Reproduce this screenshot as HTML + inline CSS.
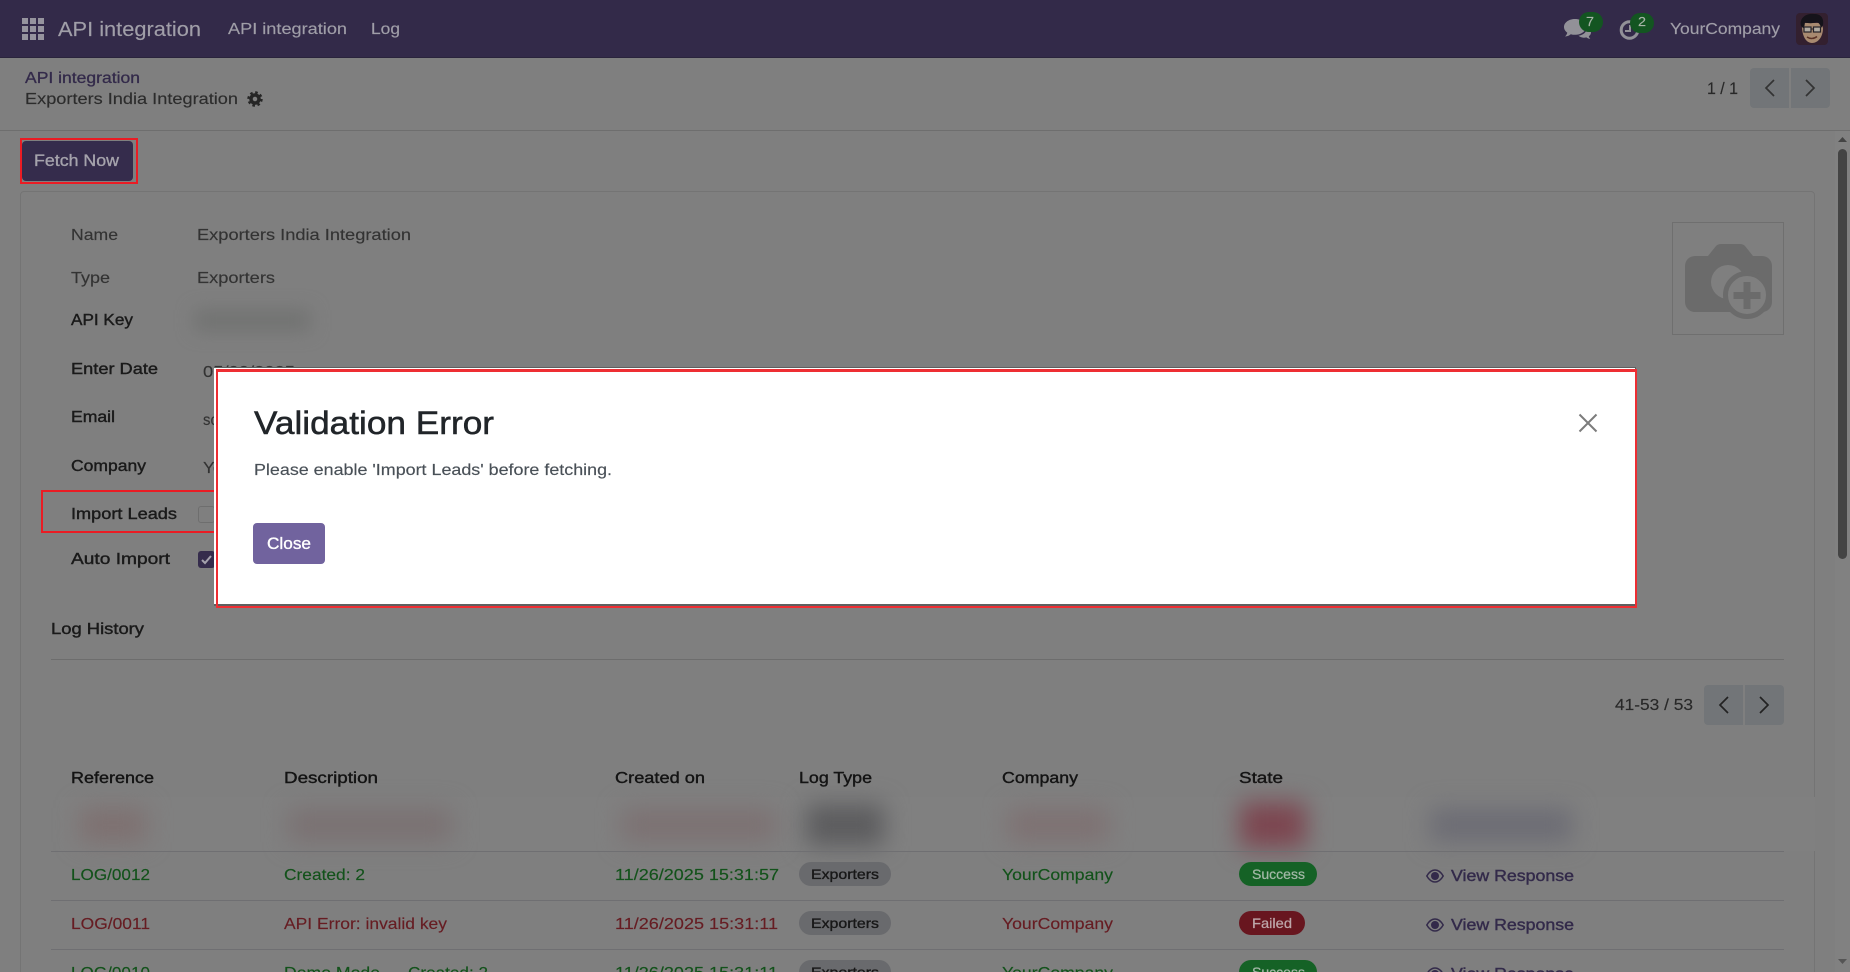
<!DOCTYPE html>
<html lang="en">
<head>
<meta charset="utf-8">
<title>API integration</title>
<style>
html,body{margin:0;padding:0;width:1850px;height:972px;overflow:hidden;background:#7f7f7f;font-family:"Liberation Sans",sans-serif;}
#p{position:relative;width:1850px;height:972px;overflow:hidden;background:#7f7f7f;}
.a{position:absolute;box-sizing:border-box;}
.t{position:absolute;white-space:nowrap;line-height:20px;height:20px;font-size:16px;color:#333;transform-origin:left center;margin-top:1px;-webkit-text-stroke:.15px currentColor;}
.m{-webkit-text-stroke:.4px currentColor;}
.n{margin-top:0;}
svg{position:absolute;overflow:visible;}
.g{color:#12521a}.r{color:#661c22}
.pill{position:absolute;height:24px;border-radius:12px;}
.bl{position:absolute;filter:blur(12px);}
</style>
</head>
<body>
<div id="p">
<!-- navbar -->
<div class="a" style="left:0;top:0;width:1850px;height:58px;background:#332a49;border-bottom:1px solid #2a243c;"></div>
<svg style="left:22px;top:18px" width="22" height="22" fill="#96949e"><rect x="0" y="0" width="6" height="6"/><rect x="8" y="0" width="6" height="6"/><rect x="16" y="0" width="6" height="6"/><rect x="0" y="8" width="6" height="6"/><rect x="8" y="8" width="6" height="6"/><rect x="16" y="8" width="6" height="6"/><rect x="0" y="16" width="6" height="6"/><rect x="8" y="16" width="6" height="6"/><rect x="16" y="16" width="6" height="6"/></svg>
<span class="t" style="left:58px;top:19px;font-size:20px;color:#a09ea8;--w:143">API integration</span>
<span class="t" style="left:228px;top:19px;font-size:16px;color:#a09ea8;--w:119">API integration</span>
<span class="t" style="left:371px;top:19px;font-size:16px;color:#a09ea8;--w:29">Log</span>
<svg style="left:1560px;top:10px" width="50" height="32"><path d="M15 9c-6 0-11 3.400-11 8 0 2.300 1.300 4.300 3.300 5.700-.4 1.500-1.300 2.800-2.300 3.800 2.300-.2 4.300-1 5.800-2.300 1.300.4 2.700.6 4.200.6 6 0 11-3.400 11-7.800s-5-8-11-8z" fill="#929198"/><path d="M27 18c0 3.800-3.600 7-8.500 7.800 1.300 1.200 3.200 1.900 5.300 1.900.9 0 1.700-.1 2.500-.3 1 .8 2.400 1.400 4 1.600-.7-.8-1.300-1.700-1.500-2.700 1.300-.9 2.200-2.300 2.200-3.800 0-1.900-1.500-3.600-4-4.500z" fill="#929198"/><rect x="19" y="2" width="24" height="20" rx="10" fill="#135521"/></svg>
<span class="t n" style="left:1586px;top:12px;font-size:13px;color:#a8b4a8;--w:8">7</span>
<svg style="left:1615px;top:10px" width="44" height="32"><circle cx="14.500" cy="20" r="8.300" fill="none" stroke="#929198" stroke-width="3"/><path d="M15 15v6h-5" fill="none" stroke="#929198" stroke-width="2"/><rect x="15" y="3" width="24" height="20" rx="10" fill="#135521"/></svg>
<span class="t n" style="left:1638px;top:12px;font-size:13px;color:#a8b4a8;--w:8">2</span>
<span class="t" style="left:1670px;top:19px;font-size:16px;color:#a09ea8;--w:110">YourCompany</span>
<svg style="left:1796px;top:13px" width="32" height="32"><rect width="32" height="32" rx="4" fill="#33202f"/><path d="M6 13c0 10 4 17 10 17s11-6 11-15l-2-5H8z" fill="#a88a70"/><path d="M5 13C3 5 10 0 18 1c7 0 10 4 9 11l-2 3c-.5-3-2-5-4-6-4 1.500-8 1.500-12 .5l-1 6c-1-.5-2-1.500-3-2.500z" fill="#15131a"/><rect x="8" y="14" width="7" height="5" fill="#b0aaa0" stroke="#252228" stroke-width="1.200"/><rect x="17.500" y="14" width="7" height="5" fill="#b0aaa0" stroke="#252228" stroke-width="1.200"/><path d="M15 16h2.500" stroke="#252228" stroke-width="1"/><path d="M11 24c3 2 7 2 10-.5" stroke="#5a3226" stroke-width="1.500" fill="none"/></svg>

<!-- control panel -->
<span class="t" style="left:25px;top:68px;font-size:16px;color:#332a4a;--w:115;-webkit-text-stroke:.3px #332a4a">API integration</span>
<span class="t" style="left:25px;top:89px;font-size:16px;color:#2c2c2c;--w:213">Exporters India Integration</span>
<svg style="left:247px;top:91px" width="16" height="16"><circle cx="8" cy="8" r="6.500" fill="none" stroke="#262626" stroke-width="2.400" stroke-dasharray="2.550 2.550"/><circle cx="8" cy="8" r="4" fill="none" stroke="#262626" stroke-width="3.500"/></svg>
<span class="t" style="left:1707px;top:78px;font-size:17px;color:#282828;--w:31">1 / 1</span>
<div class="a" style="left:1750px;top:68px;width:39px;height:40px;background:#727578;border-radius:4px 0 0 4px;"></div>
<div class="a" style="left:1791px;top:68px;width:39px;height:40px;background:#727578;border-radius:0 4px 4px 0;"></div>
<svg style="left:1750px;top:68px" width="80" height="40" fill="none" stroke="#333" stroke-width="1.700"><path d="M24 12l-8 8 8 8M56 12l8 8-8 8"/></svg>
<div class="a" style="left:0;top:130px;width:1850px;height:1px;background:#6e6e6e;"></div>

<!-- fetch now -->
<div class="a" style="left:22px;top:141px;width:111px;height:40px;background:#352c4c;border-radius:4px;"></div>
<span class="t" style="left:34px;top:150px;font-size:17px;color:#a5a3ac;--w:85;-webkit-text-stroke:.35px #a5a3ac">Fetch Now</span>
<div class="a" style="left:20px;top:138px;width:118px;height:46px;border:2px solid #ea1c24;"></div>

<!-- sheet -->
<div class="a" style="left:20px;top:191px;width:1795px;height:800px;border:1px solid #747474;border-radius:4px;background:#7f7f7f;"></div>
<span class="t" style="left:71px;top:225px;color:#333;--w:47">Name</span>
<span class="t" style="left:197px;top:225px;color:#333;--w:214">Exporters India Integration</span>
<span class="t" style="left:71px;top:268px;color:#333;--w:39">Type</span>
<span class="t" style="left:197px;top:268px;color:#333;--w:78">Exporters</span>
<span class="t m" style="left:71px;top:310px;color:#1a1a1a;--w:62">API Key</span>
<div class="bl" style="left:195px;top:310px;width:115px;height:21px;background:#717271;filter:blur(9px)"></div>
<span class="t m" style="left:71px;top:359px;color:#1a1a1a;--w:87">Enter Date</span>
<span class="t" style="left:203px;top:362px;color:#333;--w:92">05/00/2025</span>
<span class="t m" style="left:71px;top:407px;color:#1a1a1a;--w:44">Email</span>
<span class="t" style="left:203px;top:410px;color:#333;--w:30">sc@</span>
<span class="t m" style="left:71px;top:456px;color:#1a1a1a;--w:75">Company</span>
<span class="t" style="left:203px;top:458px;color:#333;--w:110">YourCompany</span>
<span class="t m" style="left:71px;top:504px;color:#1a1a1a;--w:106">Import Leads</span>
<div class="a" style="left:198px;top:506px;width:17px;height:17px;border:1px solid #6e6e6e;border-radius:3px;"></div>
<span class="t m" style="left:71px;top:549px;color:#1a1a1a;--w:99">Auto Import</span>
<div class="a" style="left:198px;top:551px;width:17px;height:17px;background:#352c4c;border-radius:3px;"></div>
<svg style="left:198px;top:551px" width="17" height="17"><path d="M4 9l3 3 6-7" stroke="#a5a2ad" stroke-width="2" fill="none"/></svg>
<div class="a" style="left:41px;top:490px;width:180px;height:43px;border:2px solid #ea1c24;"></div>

<!-- camera -->
<div class="a" style="left:1672px;top:222px;width:112px;height:113px;border:1px solid #6f6f6f;"></div>
<svg style="left:1672px;top:222px" width="112" height="113"><path d="M13 44a10 10 0 0 1 10-10h13l8-10q2-2 5-2h19q3 0 5 2l8 10h9a10 10 0 0 1 10 10v36a10 10 0 0 1-10 10H23a10 10 0 0 1-10-10z" fill="#6b6b6b"/><circle cx="56" cy="60" r="17" fill="#7f7f7f"/><circle cx="75" cy="73" r="21.500" fill="#7f7f7f" stroke="#6b6b6b" stroke-width="5"/><path d="M75 60v27M61.500 73.500h27" stroke="#6b6b6b" stroke-width="7"/></svg>

<!-- log history -->
<span class="t m" style="left:51px;top:619px;color:#1a1a1a;--w:93">Log History</span>
<div class="a" style="left:51px;top:659px;width:1733px;height:1px;background:#6d6d6d;"></div>
<span class="t" style="left:1615px;top:695px;color:#282828;--w:78">41-53 / 53</span>
<div class="a" style="left:1704px;top:685px;width:39px;height:40px;background:#727578;border-radius:4px 0 0 4px;"></div>
<div class="a" style="left:1745px;top:685px;width:39px;height:40px;background:#727578;border-radius:0 4px 4px 0;"></div>
<svg style="left:1704px;top:685px" width="80" height="40" fill="none" stroke="#222" stroke-width="1.700"><path d="M24 12l-8 8 8 8M56 12l8 8-8 8"/></svg>

<!-- table head -->
<span class="t m" style="left:71px;top:768px;color:#141414;--w:83">Reference</span>
<span class="t m" style="left:284px;top:768px;color:#141414;--w:94">Description</span>
<span class="t m" style="left:615px;top:768px;color:#141414;--w:90">Created on</span>
<span class="t m" style="left:799px;top:768px;color:#141414;--w:73">Log Type</span>
<span class="t m" style="left:1002px;top:768px;color:#141414;--w:76">Company</span>
<span class="t m" style="left:1239px;top:768px;color:#141414;--w:44">State</span>

<!-- blurred row -->
<div class="a" style="left:60px;top:797px;width:1755px;height:54px;background:#808080;"></div>
<div class="bl" style="left:80px;top:808px;width:66px;height:34px;background:#7e7070"></div>
<div class="bl" style="left:288px;top:808px;width:164px;height:34px;background:#7a7172"></div>
<div class="bl" style="left:622px;top:808px;width:154px;height:34px;background:#7c7172"></div>
<div class="bl" style="left:806px;top:804px;width:78px;height:42px;background:#5c5c5e"></div>
<div class="bl" style="left:1008px;top:808px;width:100px;height:34px;background:#7e7172"></div>
<div class="bl" style="left:1240px;top:802px;width:66px;height:46px;background:#7c4650"></div>
<div class="bl" style="left:1430px;top:808px;width:142px;height:34px;background:#6c6c74"></div>
<div class="a" style="left:51px;top:851px;width:1733px;height:1px;background:#6f6f72;"></div>

<!-- row 12 -->
<span class="t g" style="left:71px;top:865px;--w:79">LOG/0012</span>
<span class="t g" style="left:284px;top:865px;--w:81">Created: 2</span>
<span class="t g" style="left:615px;top:865px;--w:164">11/26/2025 15:31:57</span>
<div class="pill" style="left:799px;top:862px;width:92px;background:#696a6d;"></div>
<span class="t n" style="left:811px;top:864px;font-size:14px;color:#181818;--w:68;-webkit-text-stroke:.35px #181818">Exporters</span>
<span class="t g" style="left:1002px;top:865px;--w:111">YourCompany</span>
<div class="pill" style="left:1239px;top:862px;width:78px;background:#156226;"></div>
<span class="t n" style="left:1252px;top:864px;font-size:14px;color:#a2b8a6;--w:53;-webkit-text-stroke:.25px #a2b8a6">Success</span>
<svg style="left:1426px;top:869px" width="18" height="14"><path d="M.8 7C3 3.200 5.800 1 9 1s6 2.200 8.200 6C15 10.800 12.200 13 9 13S3 10.800.8 7z" fill="none" stroke="#332a4a" stroke-width="1.500"/><circle cx="9" cy="7" r="4" fill="#332a4a"/></svg>
<span class="t" style="left:1451px;top:866px;color:#332a4a;--w:123;-webkit-text-stroke:.4px #332a4a">View Response</span>
<div class="a" style="left:51px;top:900px;width:1733px;height:1px;background:#6f6f72;"></div>

<!-- row 11 -->
<span class="t r" style="left:71px;top:914px;--w:79">LOG/0011</span>
<span class="t r" style="left:284px;top:914px;--w:163">API Error: invalid key</span>
<span class="t r" style="left:615px;top:914px;--w:163">11/26/2025 15:31:11</span>
<div class="pill" style="left:799px;top:911px;width:92px;background:#696a6d;"></div>
<span class="t n" style="left:811px;top:913px;font-size:14px;color:#181818;--w:68;-webkit-text-stroke:.35px #181818">Exporters</span>
<span class="t r" style="left:1002px;top:914px;--w:111">YourCompany</span>
<div class="pill" style="left:1239px;top:911px;width:66px;background:#68161f;"></div>
<span class="t n" style="left:1252px;top:913px;font-size:14px;color:#bda6a9;--w:40;-webkit-text-stroke:.25px #bda6a9">Failed</span>
<svg style="left:1426px;top:918px" width="18" height="14"><path d="M.8 7C3 3.200 5.800 1 9 1s6 2.200 8.200 6C15 10.800 12.200 13 9 13S3 10.800.8 7z" fill="none" stroke="#332a4a" stroke-width="1.500"/><circle cx="9" cy="7" r="4" fill="#332a4a"/></svg>
<span class="t" style="left:1451px;top:915px;color:#332a4a;--w:123;-webkit-text-stroke:.4px #332a4a">View Response</span>
<div class="a" style="left:51px;top:949px;width:1733px;height:1px;background:#6f6f72;"></div>

<!-- row 10 -->
<span class="t g" style="left:71px;top:963px;--w:79">LOG/0010</span>
<span class="t g" style="left:284px;top:963px;--w:96">Demo Mode</span>
<span class="t g" style="left:408px;top:963px;--w:80">Created: 2</span>
<span class="t g" style="left:615px;top:963px;--w:163">11/26/2025 15:31:11</span>
<div class="pill" style="left:799px;top:960px;width:92px;background:#696a6d;"></div>
<span class="t n" style="left:811px;top:962px;font-size:14px;color:#181818;--w:68;-webkit-text-stroke:.35px #181818">Exporters</span>
<span class="t g" style="left:1002px;top:963px;--w:111">YourCompany</span>
<div class="pill" style="left:1239px;top:960px;width:78px;background:#156226;"></div>
<span class="t n" style="left:1252px;top:962px;font-size:14px;color:#a2b8a6;--w:53;-webkit-text-stroke:.25px #a2b8a6">Success</span>
<svg style="left:1426px;top:967px" width="18" height="14"><path d="M.8 7C3 3.200 5.800 1 9 1s6 2.200 8.200 6C15 10.800 12.200 13 9 13S3 10.800.8 7z" fill="none" stroke="#332a4a" stroke-width="1.500"/><circle cx="9" cy="7" r="4" fill="#332a4a"/></svg>
<span class="t" style="left:1451px;top:964px;color:#332a4a;--w:123;-webkit-text-stroke:.4px #332a4a">View Response</span>

<!-- scrollbar -->
<div class="a" style="left:1835px;top:131px;width:15px;height:841px;background:#818181;"></div>
<svg style="left:1838px;top:135px" width="9" height="7"><path d="M0 7l4.500-5L9 7z" fill="#444"/></svg>
<div class="a" style="left:1838px;top:149px;width:9px;height:410px;background:#444;border-radius:4.500px;"></div>
<svg style="left:1838px;top:958px" width="9" height="7"><path d="M0 1l4.500 5L9 1z" fill="#555"/></svg>

<!-- modal -->
<div class="a" style="left:214px;top:367px;width:1422px;height:239px;background:#5f5f5f;"></div>
<div class="a" style="left:214px;top:368px;width:1421px;height:236px;background:#fff;"></div>
<div class="a" style="left:216px;top:369px;width:1421px;height:239px;border:2px solid #ee2e33;border-top-width:3px;"></div>
<span class="t n" style="left:254px;top:413px;font-size:32px;color:#212529;--w:240;-webkit-text-stroke:.5px #212529">Validation Error</span>
<svg style="left:1578px;top:413px" width="20" height="20"><path d="M1.500 1.500l17 17M18.500 1.500l-17 17" stroke="#7c7c7c" stroke-width="2" fill="none"/></svg>
<span class="t" style="left:254px;top:460px;font-size:16px;color:#495057;--w:358">Please enable 'Import Leads' before fetching.</span>
<div class="a" style="left:253px;top:523px;width:72px;height:41px;background:#71639e;border-radius:4px;"></div>
<span class="t n" style="left:267px;top:534px;font-size:17px;color:#fff;--w:44;-webkit-text-stroke:.35px #fff">Close</span>
</div>
<script>
document.querySelectorAll('.t').forEach(function(e){
  var w=parseFloat(e.style.getPropertyValue('--w'));
  if(!w)return;
  var m=e.getBoundingClientRect().width;
  if(m>0)e.style.transform='scaleX('+(w/m)+')';
});
</script>
</body>
</html>
